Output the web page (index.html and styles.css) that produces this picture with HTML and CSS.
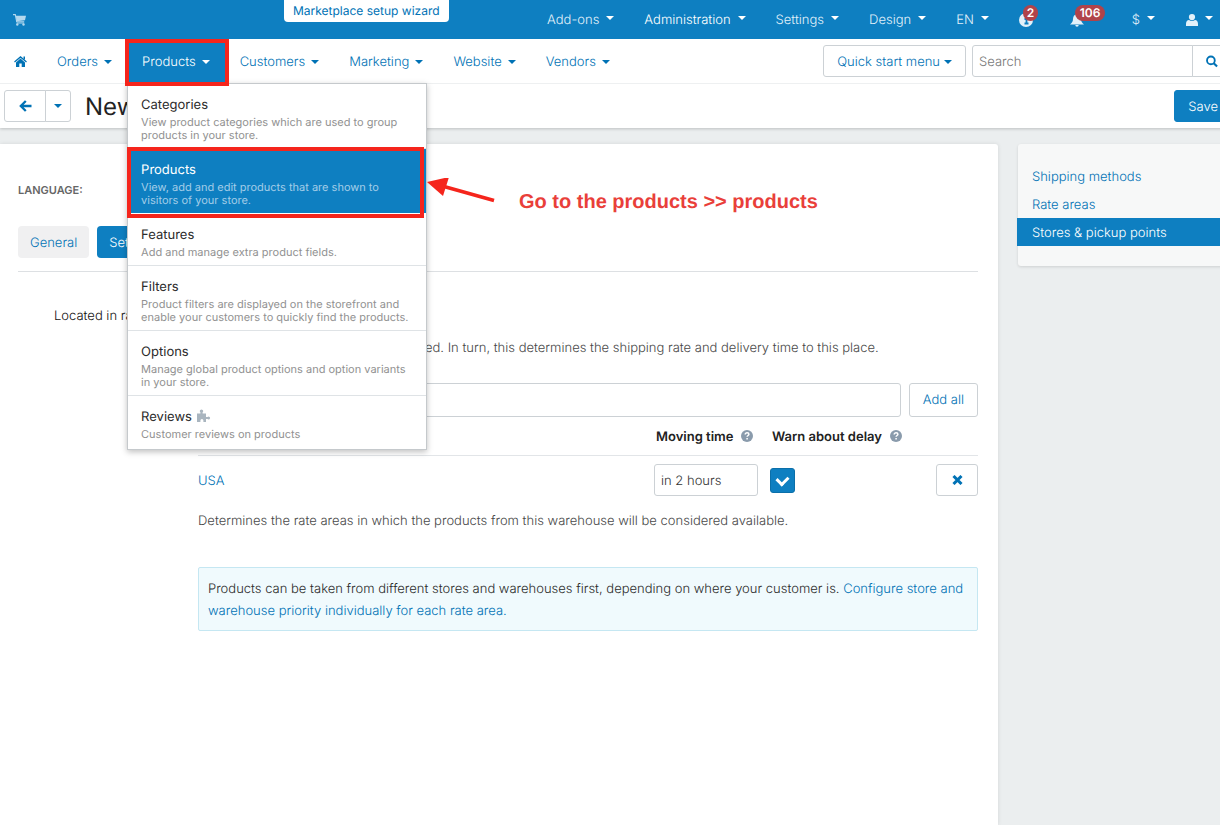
FILE: index.html
```html
<!DOCTYPE html>
<html lang="en">
<head>
<meta charset="utf-8">
<title>Stores &amp; pickup points</title>
<link rel="stylesheet" href="styles.css">
</head>
<body>
<svg class="defs" aria-hidden="true">
  <symbol id="help" viewBox="0 0 12 12"><circle cx="6" cy="6" r="6" fill="#8a9bac"/><path d="M4.200 4.600C4.200 3.300 5 2.800 6.100 2.800c1 0 1.800.6 1.800 1.500 0 1.200-1.800 1.200-1.800 2.500M6.100 7.900v1.500" fill="none" stroke="#fff" stroke-width="1.500"/></symbol>
</svg>
<div class="page">
  <header class="topbar">
    <a class="cart" href="#" aria-label="Storefront"><svg width="13" height="12" viewBox="0 0 13 12"><path d="M0 .6h2.300l1.400 7.200h7.500" fill="none" stroke="currentColor" stroke-width="1.100"/><path d="M2.800 1.800H13l-1 4.500-8.400 1z" fill="currentColor"/><circle cx="4.300" cy="10.500" r="1.200" fill="currentColor"/><circle cx="10.500" cy="10.500" r="1.200" fill="currentColor"/><path d="M3.700 9h7.500" stroke="currentColor"/></svg></a>
    <a class="wizard" href="#">Marketplace setup wizard</a>
    <nav class="topnav">
      <a href="#">Add-ons<i class="caret"></i></a>
      <a class="current" href="#">Administration<i class="caret"></i></a>
      <a href="#">Settings<i class="caret"></i></a>
      <a href="#">Design<i class="caret"></i></a>
      <a href="#">EN<i class="caret"></i></a>
      <a class="help-center" href="#" aria-label="Help center"><svg width="14" height="14" viewBox="0 0 14 14"><circle cx="7" cy="7" r="7" fill="currentColor"/><path d="M5.500 6h2v4.500M5.500 10.500h4M6.300 3.800h1.700" stroke="#0e7fc1" stroke-width="1.800" fill="none"/></svg><span class="badge">2</span></a>
      <a class="alerts" href="#" aria-label="Notifications"><svg width="14" height="14" viewBox="0 0 14 14"><path d="M7 .5c.7 0 1 .5 1 1 1.900.5 2.900 2.200 3 4.500.1 2.400.9 4 3 5.500H0c2.100-1.500 2.900-3.100 3-5.500.1-2.300 1.100-4 3-4.500 0-.5.3-1 1-1zM5.300 12h3.400a1.700 1.700 0 0 1-3.400 0z" fill="currentColor"/></svg><i class="caret"></i><span class="badge">106</span></a>
      <a class="currency" href="#">$<i class="caret"></i></a>
      <a href="#" aria-label="Account"><svg width="12" height="12" viewBox="0 0 12 12"><path d="M0 12V9.800C0 7.500 1.300 6.200 3 6c1.800 1.400 4.200 1.400 6 0 1.700.2 3 1.500 3 3.800V12z" fill="currentColor"/><circle cx="6" cy="3.100" r="3.100" fill="currentColor"/></svg><i class="caret"></i></a>
    </nav>
  </header>

  <div class="mainbar">
    <nav class="mainnav">
      <a class="home" href="#" aria-label="Home"><svg width="13" height="11" viewBox="0 0 13 11"><path d="M6.500 2.600 2 6.400V11h3.300V7.500h2.400V11H11V6.400z" fill="currentColor"/><path d="M9.500.5H11v3H9.500z" fill="currentColor"/><path d="M.5 5.900 6.500.9l6 5" fill="none" stroke="currentColor" stroke-width="1.300"/></svg></a>
      <a href="#">Orders<i class="caret"></i></a>
      <div class="dropdown">
        <a class="open" href="#">Products<i class="caret"></i></a>
        <div class="menu">
          <a href="#"><b>Categories</b><span>View product categories which are used to group products in your store.</span></a>
          <a class="active" href="#"><b>Products</b><span>View, add and edit products that are shown to visitors of your store.</span></a>
          <a href="#"><b>Features</b><span>Add and manage extra product fields.</span></a>
          <a href="#"><b>Filters</b><span>Product filters are displayed on the storefront and enable your customers to quickly find the products.</span></a>
          <a href="#"><b>Options</b><span>Manage global product options and option variants in your store.</span></a>
          <a href="#"><b>Reviews <svg width="14" height="13" viewBox="0 0 14 13"><path d="M0 4.500h3.400V3.300a1.600 1.600 0 1 1 2.200 0v1.200H9v3.400h1.500a1.500 1.500 0 1 1 0 2.200H9V13H6.400v-1.500a1.500 1.500 0 1 0-3 0V13H0z" fill="#a9b5bf"/></svg></b><span>Customer reviews on products</span></a>
        </div>
      </div>
      <a href="#">Customers<i class="caret"></i></a>
      <a href="#">Marketing<i class="caret"></i></a>
      <a href="#">Website<i class="caret"></i></a>
      <a href="#">Vendors<i class="caret"></i></a>
    </nav>
    <button class="btn quick" type="button">Quick start menu<i class="caret"></i></button>
    <form class="search">
      <input type="text" placeholder="Search" aria-label="Search">
      <button class="btn" type="button" aria-label="Find"><svg width="13" height="13" viewBox="0 0 13 13"><circle cx="5.300" cy="5.300" r="4.200" fill="none" stroke="currentColor" stroke-width="2"/><path d="m8.400 8.400 3.600 3.600" stroke="currentColor" stroke-width="2.300"/></svg></button>
    </form>
  </div>

  <div class="titlebar">
    <div class="back">
      <button class="btn" type="button" aria-label="Back"><svg width="13" height="12" viewBox="0 0 13 12"><path d="M12.500 6H2.500M6.800 1 1.800 6l5 5" fill="none" stroke="currentColor" stroke-width="2.300"/></svg></button>
      <button class="btn" type="button" aria-label="Recent pages"><i class="caret"></i></button>
    </div>
    <h1>New</h1>
    <button class="btn primary save" type="button">Save</button>
  </div>

  <div class="body">
    <main class="card">
      <div class="language">Language:</div>
      <div class="tabs">
        <button type="button">General</button>
        <button class="selected" type="button">Settings</button>
      </div>
      <div class="form">
        <label class="form-label" for="areas">Located in rate</label>
        <div class="controls">
          <div class="spacer"></div>
          <p class="hint">The rate area where the place is located. In turn, this determines the shipping rate and delivery time to this place.</p>
          <div class="picker">
            <input id="areas" type="text">
            <button class="btn" type="button">Add all</button>
          </div>
          <table>
            <thead><tr>
              <th></th>
              <th class="col-time">Moving time<svg width="12" height="12"><use href="#help"/></svg></th>
              <th class="col-warn">Warn about delay<svg width="12" height="12"><use href="#help"/></svg></th>
              <th class="col-del"></th>
            </tr></thead>
            <tbody><tr>
              <td><a href="#">USA</a></td>
              <td><input type="text" value="in 2 hours" aria-label="Moving time"></td>
              <td><input type="checkbox" checked aria-label="Warn about delay"></td>
              <td><button class="btn" type="button" aria-label="Remove"><svg width="11" height="10" viewBox="0 0 11 10"><path d="m1.500 1 8 8m0-8-8 8" stroke="currentColor" stroke-width="3"/></svg></button></td>
            </tr></tbody>
          </table>
          <p class="hint after">Determines the rate areas in which the products from this warehouse will be considered available.</p>
          <div class="info">Products can be taken from different stores and warehouses first, depending on where your customer is. <a href="#">Configure store and warehouse priority individually for each rate area.</a></div>
        </div>
      </div>
    </main>
    <aside class="side">
      <a href="#">Shipping methods</a>
      <a href="#">Rate areas</a>
      <a class="here" href="#">Stores &amp; pickup points</a>
    </aside>
  </div>

  <div class="callout">
    <svg width="68" height="26" viewBox="0 0 68 26"><path d="M17 8.500 67 22.500" stroke="#f5251c" stroke-width="3.600"/><path d="M0 4 22 -1 16 18z" fill="#f5251c"/></svg>
    <strong>Go to the products &gt;&gt; products</strong>
  </div>
</div>
</body>
</html>
```
FILE: styles.css
```css
* { box-sizing: border-box; }
body {
  margin: 0;
  overflow-x: hidden;
  background: #ebeeef;
  color: #222;
  font: 350 13px/20px Inter, "Liberation Sans", sans-serif;
  text-rendering: geometricPrecision;
}
a { color: #0072b5; text-decoration: none; }
p, h1 { margin: 0; }
input, button { font: inherit; color: inherit; text-rendering: inherit; }
.defs { position: absolute; width: 0; height: 0; }

/* The page runs a little past the right edge of the window */
.page {
  position: relative;
  display: flex;
  flex-direction: column;
  min-height: 100vh;
  margin-right: -20px;
}
.caret {
  display: inline-block;
  border: 4px solid transparent;
  border-top-color: currentColor;
  border-bottom: 0;
}
.btn {
  display: inline-flex;
  align-items: center;
  justify-content: center;
  height: 32px;
  padding: 0 13px;
  border: 1px solid #ccd1d5;
  border-radius: 3px;
  background: #fff;
  color: #0072b5;
}
.primary { border-color: #0e7fc1; background: #0e7fc1; color: #fff; }
input[type="text"] {
  min-width: 0;
  height: 32px;
  padding: 2px 6px 0;
  border: 1px solid #ccd1d5;
  border-radius: 3px;
  background: #fff;
}

.topbar {
  display: flex;
  align-items: center;
  height: 39px;
  padding: 0 12px 0 13px;
  background: #0e7fc1;
}
.cart { display: flex; color: #b3d8ee; }
.wizard {
  align-self: flex-start;
  height: 22px;
  margin-left: 258px;
  padding: 1px 9px;
  border-radius: 0 0 4px 4px;
  background: #fff;
  font-size: 12px;
  font-weight: 400;
}
.topnav { display: flex; margin-left: auto; }
.topnav a {
  position: relative;
  display: flex;
  align-items: center;
  gap: 7px;
  padding: 0 15px;
  color: #e2f1fa;
}
.topnav .current { color: #fff; }
.topnav .caret { margin-bottom: 3px; color: #fff; }
.topnav .help-center { padding-right: 22px; }
.topnav .alerts { gap: 10px; }
.topnav .currency { padding-right: 16px; }
.badge {
  position: absolute;
  top: -5px;
  left: 19px;
  padding: 0 4px;
  border-radius: 8px;
  background: #b0434a;
  color: #fff;
  font-size: 12px;
  font-weight: 600;
  line-height: 16px;
}
.alerts .badge { left: 20px; padding: 0 5px; }

.mainbar {
  position: relative;
  z-index: 2;
  display: flex;
  align-items: center;
  height: 45px;
  padding-right: 8px;
  border-bottom: 1px solid #eef0f1;
  background: #fff;
}
.mainnav { display: flex; align-self: stretch; margin-right: auto; }
.mainnav > a, .open {
  display: flex;
  align-items: center;
  gap: 6px;
  height: 44px;
  padding: 2px 15px 0;
}
.mainnav > .home { padding: 0 15px 0 14px; }
.dropdown { position: relative; }
.open {
  position: relative;
  z-index: 3;
  background: #0e7fc1;
  color: #fff;
}
.open::after {
  content: "";
  position: absolute;
  inset: 0 -4px -3px -2px;
  border: 4px solid #f5251c;
}
.menu {
  position: absolute;
  z-index: 2;
  top: 44px;
  left: 0;
  width: 300px;
  border: 1px solid #c5c9cc;
  background: #fff;
  box-shadow: 0 2px 6px rgba(0, 0, 0, .25);
}
.menu a {
  position: relative;
  display: block;
  padding: 10px 13px 6px;
  border-bottom: 1px solid #dfe3e6;
}
.menu a:last-child { padding-bottom: 8px; border-bottom: 0; }
.menu b { display: block; padding-top: 1px; font-weight: 400; color: #2b2b2b; }
.menu b svg { margin-left: 1px; vertical-align: -1px; }
.menu span { display: block; padding-top: 1px; font-size: 11px; font-weight: 400; line-height: 13px; color: #919191; }
.menu .active { background: #0e7fc1; border-color: #fff; }
.menu .active::after {
  content: "";
  position: absolute;
  inset: -2px 2px -5px -1px;
  border: 4px solid #f5251c;
}
.menu .active b { color: #fff; }
.menu .active span { color: #a3cde8; }
.quick { gap: 4px; margin-right: 6px; }
.search { display: flex; width: 260px; }
.search input[type="text"] { flex: 1; border-radius: 3px 0 0 3px; }
.search input::placeholder { color: #777; }
.search .btn { width: 40px; margin-left: -1px; border-radius: 0 3px 3px 0; }

.titlebar {
  position: relative;
  display: flex;
  align-items: center;
  height: 44px;
  padding: 0 8px 0 4px;
  background: #fff;
  box-shadow: 0 1px 3px rgba(0, 0, 0, .2);
}
.back { display: flex; margin-right: 14px; }
.back .btn:first-child { width: 42px; border-radius: 3px 0 0 3px; }
.back .btn:last-child { width: 26px; margin-left: -1px; padding: 0; border-radius: 0 3px 3px 0; }
h1 { padding-top: 1px; font-size: 24px; line-height: 32px; font-weight: 400; color: #222; }
.save { margin-left: auto; }
.save, .quick { padding-top: 2px; }

.body {
  display: flex;
  flex: 1;
  align-items: flex-start;
  gap: 20px;
  padding-top: 16px;
}
.card {
  flex: 1;
  align-self: stretch;
  padding: 36px 20px 40px 18px;
  border-radius: 0 3px 0 0;
  background: #fff;
  box-shadow: 0 0 4px rgba(0, 0, 0, .1);
}
.language { font-size: 11px; font-weight: 600; color: #666; text-transform: uppercase; }
.tabs {
  display: flex;
  gap: 8px;
  padding: 26px 0 13px;
  border-bottom: 1px solid #dde0e3;
}
.tabs button {
  height: 32px;
  padding: 2px 12px 0;
  border: 0;
  border-radius: 4px;
  background: #f0f0f1;
  color: #0072b5;
}
.tabs .selected { background: #0e7fc1; color: #fff; }
.form { display: flex; padding-top: 34px; }
.form-label { width: 144px; margin-left: 36px; flex: none; color: #111; white-space: nowrap; }
.controls { flex: 1; min-width: 0; }
.spacer { height: 32px; }
.hint { color: #484848; }
.picker { display: flex; gap: 8px; margin-top: 25px; }
.picker input[type="text"] { flex: 1; height: 34px; }
.picker .btn { height: 34px; }
table { width: 100%; border-collapse: collapse; table-layout: fixed; }
th { height: 38px; padding: 2px 0 0; border-bottom: 1px solid #e2e5e8; text-align: left; font-weight: 600; white-space: nowrap; color: #222; }
th svg { margin-left: 8px; vertical-align: -1px; }
th.col-time, th.col-warn { padding-left: 2px; }
.col-time { width: 116px; }
.col-warn { width: 166px; }
.col-del { width: 42px; }
td { height: 49px; padding: 0; vertical-align: middle; }
td:first-child { padding-top: 2px; }
td input[type="text"] { width: 104px; color: #333; }
td .btn { width: 42px; padding: 0; }
td input, td .btn { display: flex; }
input[type="checkbox"] {
  appearance: none;
  width: 25px;
  height: 25px;
  margin: 2px 0 0;
  border: 1px solid #0b6fa9;
  border-radius: 3px;
  background: #0e7fc1;
}
input[type="checkbox"]:checked::after {
  content: "";
  width: 11px;
  height: 6px;
  margin: 6px;
  border: solid #fff;
  border-width: 0 0 3px 3px;
  transform: rotate(-45deg);
}
.after { margin-top: 7px; }
.info {
  margin-top: 36px;
  padding: 10px 0 8px 9px;
  border: 1px solid #c5e7f2;
  border-radius: 2px;
  background: #f0fafd;
  line-height: 22px;
  color: #2c2c2c;
}
.side {
  width: 222px;
  padding: 18px 0 20px;
  border-radius: 3px;
  background: #f7f8f8;
  box-shadow: 0 1px 3px rgba(0, 0, 0, .12);
}
.side a { display: block; padding: 5px 14px 3px; }
.side .here { margin-left: -1px; padding-left: 15px; background: #0e7fc1; color: #fff; }

/* Annotation drawn over the page */
.callout {
  position: absolute;
  z-index: 3;
  top: 178px;
  left: 427px;
  display: flex;
  align-items: flex-start;
  gap: 24px;
}
.callout strong {
  margin-top: 12px;
  font: 700 20px/24px "Liberation Sans", Arial, sans-serif;
  color: #e93f3a;
}
```
